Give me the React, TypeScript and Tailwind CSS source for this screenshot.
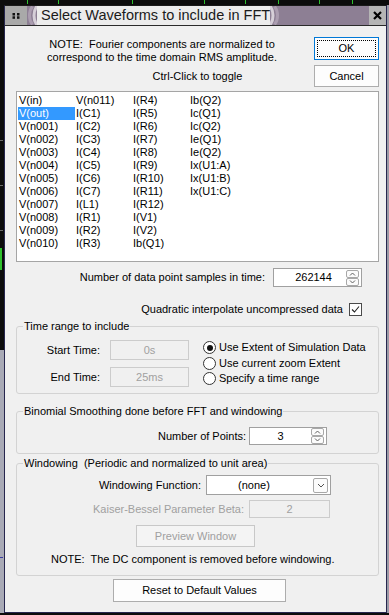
import React from "react";

const cols: string[][] = [
  ["V(in)", "V(out)", "V(n001)", "V(n002)", "V(n003)", "V(n004)", "V(n005)", "V(n006)", "V(n007)", "V(n008)", "V(n009)", "V(n010)"],
  ["V(n011)", "I(C1)", "I(C2)", "I(C3)", "I(C4)", "I(C5)", "I(C6)", "I(C7)", "I(L1)", "I(R1)", "I(R2)", "I(R3)"],
  ["I(R4)", "I(R5)", "I(R6)", "I(R7)", "I(R8)", "I(R9)", "I(R10)", "I(R11)", "I(R12)", "I(V1)", "I(V2)", "Ib(Q1)"],
  ["Ib(Q2)", "Ic(Q1)", "Ic(Q2)", "Ie(Q1)", "Ie(Q2)", "Ix(U1:A)", "Ix(U1:B)", "Ix(U1:C)"],
];

function Spinner() {
  return (
    <div className="w-[13px] mr-[2px] flex flex-col">
      <div className="h-[8px] border border-[#a8a8a8] rounded-[2px] bg-[#fbfbfb] flex items-center justify-center">
        <svg width="7" height="4" viewBox="0 0 7 4" className="block">
          <path d="M1 3.5 L3.5 1 L6 3.5" fill="none" stroke="#606060" strokeWidth="1" />
        </svg>
      </div>
      <div className="h-[8px] border border-[#a8a8a8] rounded-[2px] bg-[#fbfbfb] flex items-center justify-center">
        <svg width="7" height="4" viewBox="0 0 7 4" className="block">
          <path d="M1 0.5 L3.5 3 L6 0.5" fill="none" stroke="#606060" strokeWidth="1" />
        </svg>
      </div>
    </div>
  );
}

function Radio({ checked, label }: { checked?: boolean; label: string }) {
  return (
    <div className="h-[15.5px] flex items-center gap-[3px]">
      <div className="w-[13px] h-[13px] rounded-full border border-[#333333] bg-white flex items-center justify-center">
        {checked ? <div className="w-[6px] h-[6px] rounded-full bg-[#111111]" /> : null}
      </div>
      <span className="leading-[13px] whitespace-nowrap">{label}</span>
    </div>
  );
}

export default function App() {
  return (
    <div className="w-[389px] h-[615px] bg-[#0c0c0c] flex flex-col overflow-hidden font-['Liberation_Sans',Arial,sans-serif] text-[11px] text-black">
      <svg width="389" height="5" className="block shrink-0">
        <rect width="389" height="5" fill="#0c0c0c" />
        {[27, 58, 132, 204, 245, 278, 319, 352].map((x) => (
          <rect key={x} x={x} y="0" width="1" height="4" fill="#2ec02e" />
        ))}
      </svg>
      <div className="flex h-[608px] shrink-0">
        <svg width="4" height="608" className="block shrink-0">
          <rect width="4" height="345" fill="#0c0c0c" />
          <rect y="345" width="4" height="263" fill="#a9aab6" />
          <rect y="135" width="3" height="1" fill="#6a6a6a" />
          <rect y="180" width="3" height="1" fill="#6a6a6a" />
          <rect y="225" width="3" height="1" fill="#6a6a6a" />
          <rect y="243" width="2" height="22" fill="#2ec02e" />
          <rect y="552" width="3" height="1" fill="#3a3aa0" />
        </svg>
        <div className="w-[383px] h-[608px] flex flex-col border-x border-b border-[#26264e] border-t border-t-[#1a1a1a]">
          {/* Title bar */}
          <div className="h-[20px] shrink-0 flex border-b border-[#2a2a2a]">
            <div className="w-[22px] bg-[#a9a9a9] flex items-center justify-center">
              <svg width="8" height="6" viewBox="0 0 8 6" className="block">
                <rect x="0.5" y="0" width="2.5" height="2.5" fill="#111" />
                <rect x="5" y="0" width="2.5" height="2.5" fill="#111" />
                <rect x="0.5" y="3.3" width="2.5" height="2.5" fill="#111" />
                <rect x="5" y="3.3" width="2.5" height="2.5" fill="#111" />
              </svg>
            </div>
            <div className="flex-1 flex bg-[#8d7f94]">
              <svg width="10" height="19" viewBox="0 0 10 19" className="block shrink-0">
                <path d="M5.5 0.5 C1.5 5, 1.5 14, 5.5 18.5" fill="none" stroke="#ab9db0" strokeWidth="3" />
                <path d="M10 0 C6 5, 6 14, 10 19" fill="none" stroke="#d6cfd8" strokeWidth="3" />
              </svg>
              <div className="w-[233px] bg-[#ececec] pl-[4px] leading-[19px] text-[14.5px] text-[#1b1b1b] whitespace-nowrap">
                Select Waveforms to include in FFT
              </div>
              <svg width="10" height="19" viewBox="0 0 10 19" className="block shrink-0">
                <path d="M0 0 C4 5, 4 14, 0 19" fill="none" stroke="#d6cfd8" strokeWidth="3" />
                <path d="M4.5 0.5 C8.5 5, 8.5 14, 4.5 18.5" fill="none" stroke="#ab9db0" strokeWidth="3" />
              </svg>
            </div>
            <div className="w-[17px] bg-[#b5b5b5] flex items-center justify-center">
              <svg width="9" height="9" viewBox="0 0 9 9" className="block">
                <path d="M1 1 L8 8 M8 1 L1 8" stroke="#000" strokeWidth="2.2" />
              </svg>
            </div>
          </div>

          {/* Body */}
          <div className="h-[586px] bg-[#f0f0f0] pl-[11px] pr-[7px] pt-[11px] flex flex-col">
            <div className="grid grid-cols-[1fr_65px] grid-rows-[23px_22px] gap-x-[6px] gap-y-[5px]">
              <div className="col-start-1 row-start-1 h-[23px] text-center leading-[13px] pt-[0.5px] whitespace-pre">
                {"NOTE:  Fourier components are normalized to"}
                <br />
                {"correspond to the time domain RMS amplitude."}
              </div>
              <div className="col-start-2 row-start-1 h-[23px] border border-[#0078d7] bg-[#fdfdfd] p-[2px]">
                <div className="h-full border border-dotted border-black flex items-center justify-center">OK</div>
              </div>
              <div className="col-start-1 col-end-3 row-start-2 self-center text-center leading-[13px] pt-[1px]">
                Ctrl-Click to toggle
              </div>
              <div className="col-start-2 row-start-2 h-[22px] border border-[#adadad] bg-[#fdfdfd] flex items-center justify-center">
                Cancel
              </div>
            </div>

            {/* List */}
            <div className="mt-[4px] h-[171px] shrink-0 border border-[#a5a5a5] bg-white pt-[2px] pl-[1px] grid grid-flow-col grid-rows-[repeat(12,13px)] auto-cols-[57px] content-start justify-start">
              {cols.flat().map((s) => (
                <div
                  key={s}
                  className={
                    s === "V(out)"
                      ? "h-[13px] leading-[13px] px-[1px] whitespace-nowrap bg-[#3399ff] text-white"
                      : "h-[13px] leading-[13px] px-[1px] whitespace-nowrap"
                  }
                >
                  {s}
                </div>
              ))}
            </div>

            {/* Samples */}
            <div className="mt-[6px] flex justify-end items-center gap-[8px] pr-[17px]">
              <span className="leading-[13px]">Number of data point samples in time:</span>
              <div className="w-[89px] h-[19px] border border-[#a0a0a0] bg-white flex items-center">
                <div className="flex-1 text-center pl-[7px] leading-[13px]">262144</div>
                <Spinner />
              </div>
            </div>

            {/* Quadratic */}
            <div className="mt-[16px] h-[13px] flex justify-end items-center gap-[6px] pr-[17px]">
              <span className="leading-[13px]">Quadratic interpolate uncompressed data</span>
              <div className="w-[13px] h-[13px] border border-[#4a4a4a] bg-white flex items-center justify-center">
                <svg width="11" height="11" viewBox="0 0 11 11" className="block">
                  <path d="M2 5.5 L4.5 8 L9 2.5" fill="none" stroke="#222" strokeWidth="1.1" />
                </svg>
              </div>
            </div>

            {/* Time range */}
            <fieldset className="mt-[3.5px] border border-[#d3d3d3] rounded-[3px] m-0 p-0">
              <legend className="ml-[6px] px-[1px] leading-[13px]">Time range to include</legend>
              <div className="flex pt-[7.5px] pb-[6px]">
                <div className="grid grid-cols-[83px_79px] gap-x-[10px] gap-y-[7px] items-center">
                  <div className="text-right leading-[13px]">Start Time:</div>
                  <div className="h-[20px] border border-[#cccccc] bg-[#f0f0f0] flex items-center justify-center text-[#a0a0a0]">0s</div>
                  <div className="text-right leading-[13px]">End Time:</div>
                  <div className="h-[20px] border border-[#cccccc] bg-[#f0f0f0] flex items-center justify-center text-[#a0a0a0]">25ms</div>
                </div>
                <div className="ml-[14px] flex flex-col">
                  <Radio checked label="Use Extent of Simulation Data" />
                  <Radio label="Use current zoom Extent" />
                  <Radio label="Specify a time range" />
                </div>
              </div>
            </fieldset>

            {/* Binomial */}
            <fieldset className="mt-[10.5px] border border-[#d3d3d3] rounded-[3px] m-0 p-0">
              <legend className="ml-[6px] px-[1px] leading-[13px]">Binomial Smoothing done before FFT and windowing</legend>
              <div className="flex justify-end items-center gap-[3px] pr-[51px] pt-[9.5px] pb-[8px]">
                <span className="leading-[13px]">Number of Points:</span>
                <div className="w-[78px] h-[18px] border border-[#a0a0a0] bg-white flex items-center">
                  <div className="flex-1 text-center leading-[13px]">3</div>
                  <Spinner />
                </div>
              </div>
            </fieldset>

            {/* Windowing */}
            <fieldset className="mt-[2.5px] border border-[#d3d3d3] rounded-[3px] m-0 p-0">
              <legend className="ml-[6px] px-[1px] leading-[13px] whitespace-pre">{"Windowing  (Periodic and normalized to unit area)"}</legend>
              <div className="flex flex-col pt-[5.5px] pb-[9px]">
                <div className="flex justify-end items-center gap-[5px] pr-[47px]">
                  <span className="leading-[13px]">Windowing Function:</span>
                  <div className="w-[125px] h-[20px] border border-[#a0a0a0] bg-white flex items-center">
                    <div className="flex-1 pl-[31px] leading-[13px]">(none)</div>
                    <div className="w-[15px] h-[15px] mr-[2px] border border-[#a8a8a8] rounded-[2px] bg-[#fbfbfb] flex items-center justify-center">
                      <svg width="8" height="5" viewBox="0 0 8 5" className="block">
                        <path d="M1 1 L4 4 L7 1" fill="none" stroke="#505050" strokeWidth="1" />
                      </svg>
                    </div>
                  </div>
                </div>
                <div className="mt-[5px] flex justify-end items-center gap-[5px] pr-[48px]">
                  <span className="leading-[13px] text-[#a0a0a0]">Kaiser-Bessel Parameter Beta:</span>
                  <div className="w-[81px] h-[18px] border border-[#cccccc] bg-[#f0f0f0] flex items-center justify-center text-[#a0a0a0]">2</div>
                </div>
                <div className="mt-[7px] ml-[119px] w-[119px] h-[22px] border border-[#c8c8c8] bg-[#f4f4f4] flex items-center justify-center text-[#a0a0a0]">
                  Preview Window
                </div>
                <div className="mt-[5.5px] pl-[34px] leading-[13px] whitespace-pre">
                  {"NOTE:  The DC component is removed before windowing."}
                </div>
              </div>
            </fieldset>

            <div className="mt-[3.5px] ml-[97px] w-[173px] h-[23px] shrink-0 border border-[#adadad] bg-[#fdfdfd] flex items-center justify-center">
              Reset to Default Values
            </div>
          </div>
        </div>
        <div className="w-[2px] bg-[#9a9aa6]" />
      </div>
    </div>
  );
}
